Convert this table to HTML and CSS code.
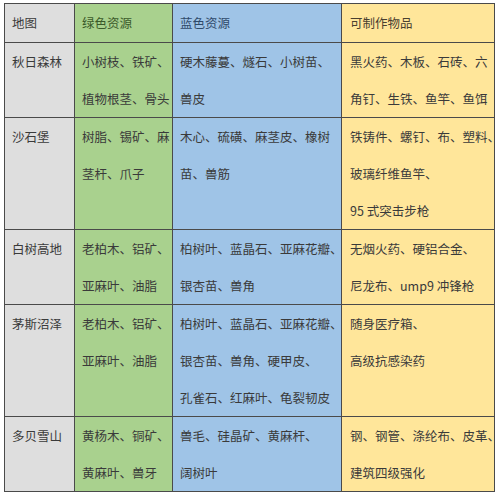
FILE: index.html
```html
<!DOCTYPE html>
<html lang="zh-CN">
<head>
<meta charset="utf-8">
<link rel="stylesheet" href="styles.css">
</head>
<body>
<table class="res">
  <colgroup>
    <col class="c-map">
    <col class="c-green">
    <col class="c-blue">
    <col class="c-yellow">
  </colgroup>
  <thead>
    <tr>
      <th class="map">地图</th>
      <th class="green">绿色资源</th>
      <th class="blue">蓝色资源</th>
      <th class="yellow">可制作物品</th>
    </tr>
  </thead>
  <tbody>
    <tr>
      <td class="map">秋日森林</td>
      <td class="green">小树枝、铁矿、<br>植物根茎、骨头</td>
      <td class="blue">硬木藤蔓、燧石、小树苗、<br>兽皮</td>
      <td class="yellow">黑火药、木板、石砖、六<br>角钉、生铁、鱼竿、鱼饵</td>
    </tr>
    <tr>
      <td class="map">沙石堡</td>
      <td class="green">树脂、锡矿、麻<br>茎杆、爪子</td>
      <td class="blue">木心、硫磺、麻茎皮、橡树<br>苗、兽筋</td>
      <td class="yellow">铁铸件、螺钉、布、塑料、<br>玻璃纤维鱼竿、<br>95 式突击步枪</td>
    </tr>
    <tr>
      <td class="map">白树高地</td>
      <td class="green">老柏木、铝矿、<br>亚麻叶、油脂</td>
      <td class="blue">柏树叶、蓝晶石、亚麻花瓣、<br>银杏苗、兽角</td>
      <td class="yellow">无烟火药、硬铝合金、<br>尼龙布、ump9 冲锋枪</td>
    </tr>
    <tr>
      <td class="map">茅斯沼泽</td>
      <td class="green">老柏木、铝矿、<br>亚麻叶、油脂</td>
      <td class="blue">柏树叶、蓝晶石、亚麻花瓣、<br>银杏苗、兽角、硬甲皮、<br>孔雀石、红麻叶、龟裂韧皮</td>
      <td class="yellow">随身医疗箱、<br>高级抗感染药</td>
    </tr>
    <tr>
      <td class="map">多贝雪山</td>
      <td class="green">黄杨木、铜矿、<br>黄麻叶、兽牙</td>
      <td class="blue">兽毛、硅晶矿、黄麻杆、<br>阔树叶</td>
      <td class="yellow">钢、钢管、涤纶布、皮革、<br>建筑四级强化</td>
    </tr>
  </tbody>
</table>
</body>
</html>
```

FILE: styles.css
```css
html, body {
  margin: 0;
  padding: 0;
  background: #ffffff;
}

body {
  padding: 3px 0 0 4px;
  font-family: "Noto Sans CJK SC", "Noto Sans", sans-serif;
  font-size: 12.5px;
  color: #3a3a3a;
}

.res {
  border-collapse: collapse;
  table-layout: fixed;
  width: 490px;
}

.c-map { width: 70px; }
.c-green { width: 98px; }
.c-blue { width: 169px; }
.c-yellow { width: 153px; }

.res th,
.res td {
  border: 1px solid #4a4a4a;
  padding: 0 4px 0 7px;
  line-height: 37px;
  text-align: left;
  vertical-align: top;
  font-weight: normal;
  white-space: nowrap;
  overflow: visible;
}

.res th {
  line-height: 38px;
}

.res .yellow {
  padding-left: 8px;
}

.map { background: #dedede; }
.green { background: #a9d18e; }
.blue { background: #9fc4e7; }
.yellow { background: #ffe69a; }

th.green { color: #3b5a2a; }
th.blue { color: #2f4a6a; }
th.yellow { color: #4a4030; }
```
